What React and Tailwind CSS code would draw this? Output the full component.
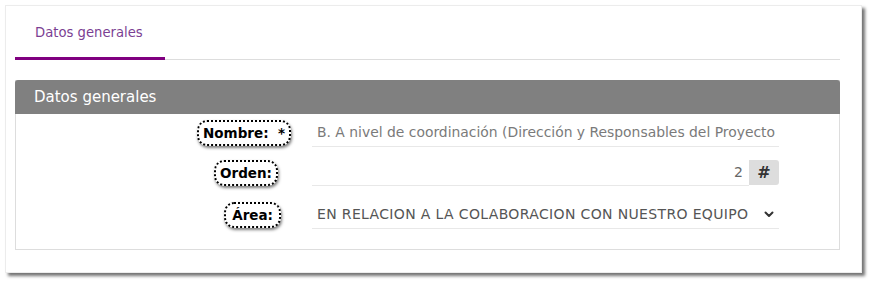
import React from "react";

const font = { fontFamily: '"DejaVu Sans", "Noto Sans", sans-serif' };

function Label({ children, className = "" }) {
  return (
    <span
      className={
        "inline-flex items-center rounded-[10px] border-2 border-dotted border-black bg-white px-[4px] text-[13.5px] font-semibold leading-[22px] text-black shadow-[1px_2px_3px_rgba(0,0,0,0.5)] " +
        className
      }
    >
      {children}
    </span>
  );
}

export default function App() {
  return (
    <div className="h-[283px] w-[870px] bg-white pl-[5px] pt-[5px]" style={font}>
      <div className="h-[268px] w-[857px] border border-[#ececec] bg-white pl-[9px] pr-[21px] shadow-[3px_3px_3px_rgba(0,0,0,0.55)]">
        {/* Tabs */}
        <div className="flex border-b border-[#dddddd]">
          <div className="-mb-px w-[150px] border-b-[3px] border-[#800080] pl-[20px] pb-[14px] pt-[17px] text-[13.2px] leading-[20px] text-[#7b3f93]">
            Datos generales
          </div>
        </div>

        {/* Panel */}
        <div className="mt-[20px] border border-[#dddddd]">
          <div className="-mx-px -mt-px flex h-[34px] items-center rounded-t-[3px] bg-[#808080] px-[19px] text-[15px] text-white">
            Datos generales
          </div>
          <div className="pb-[20px] pt-[4px]">
            {/* Row 1 */}
            <div className="flex h-[29px] items-center">
              <div className="flex w-[275px] justify-end">
                <Label>Nombre:&nbsp;&nbsp;*</Label>
              </div>
              <div className="ml-[21px] flex h-[29px] w-[467px] items-center border-b border-[#e8e8e8] pl-[5px] text-[13.9px] text-[#7a7a7a]">
                <span className="whitespace-nowrap">B. A nivel de coordinación (Dirección y Responsables del Proyecto</span>
              </div>
            </div>
            {/* Row 2 */}
            <div className="mt-[13px] flex h-[26px] items-center">
              <div className="flex w-[262px] justify-end">
                <Label>Orden:</Label>
              </div>
              <div className="ml-[34px] flex w-[467px] items-center">
                <div className="flex h-[26px] flex-1 items-center justify-end border-b border-[#e8e8e8] pr-[6px] text-[14px] text-[#666666]">
                  2
                </div>
                <div className="flex h-[25px] w-[30px] items-center justify-center self-start rounded-r-[3px] bg-[#dddddd] text-[16px] font-bold text-[#333333]">
                  #
                </div>
              </div>
            </div>
            {/* Row 3 */}
            <div className="mt-[14px] flex h-[29px] items-center">
              <div className="flex w-[265px] justify-end">
                <Label className="px-[6px]">Área:</Label>
              </div>
              <div className="ml-[31px] flex h-[29px] w-[467px] items-center justify-between border-b border-[#e8e8e8] pl-[5px] pr-[4px] text-[14px] tracking-[0.35px] text-[#555555]">
                <span className="whitespace-nowrap">EN RELACION A LA COLABORACION CON NUESTRO EQUIPO</span>
                <svg width="12" height="12" viewBox="0 0 12 12" fill="none">
                  <path d="M2.5 4.5 L6 8 L9.5 4.5" stroke="#333" strokeWidth="2" strokeLinecap="round" strokeLinejoin="round" />
                </svg>
              </div>
            </div>
          </div>
        </div>
      </div>
    </div>
  );
}
